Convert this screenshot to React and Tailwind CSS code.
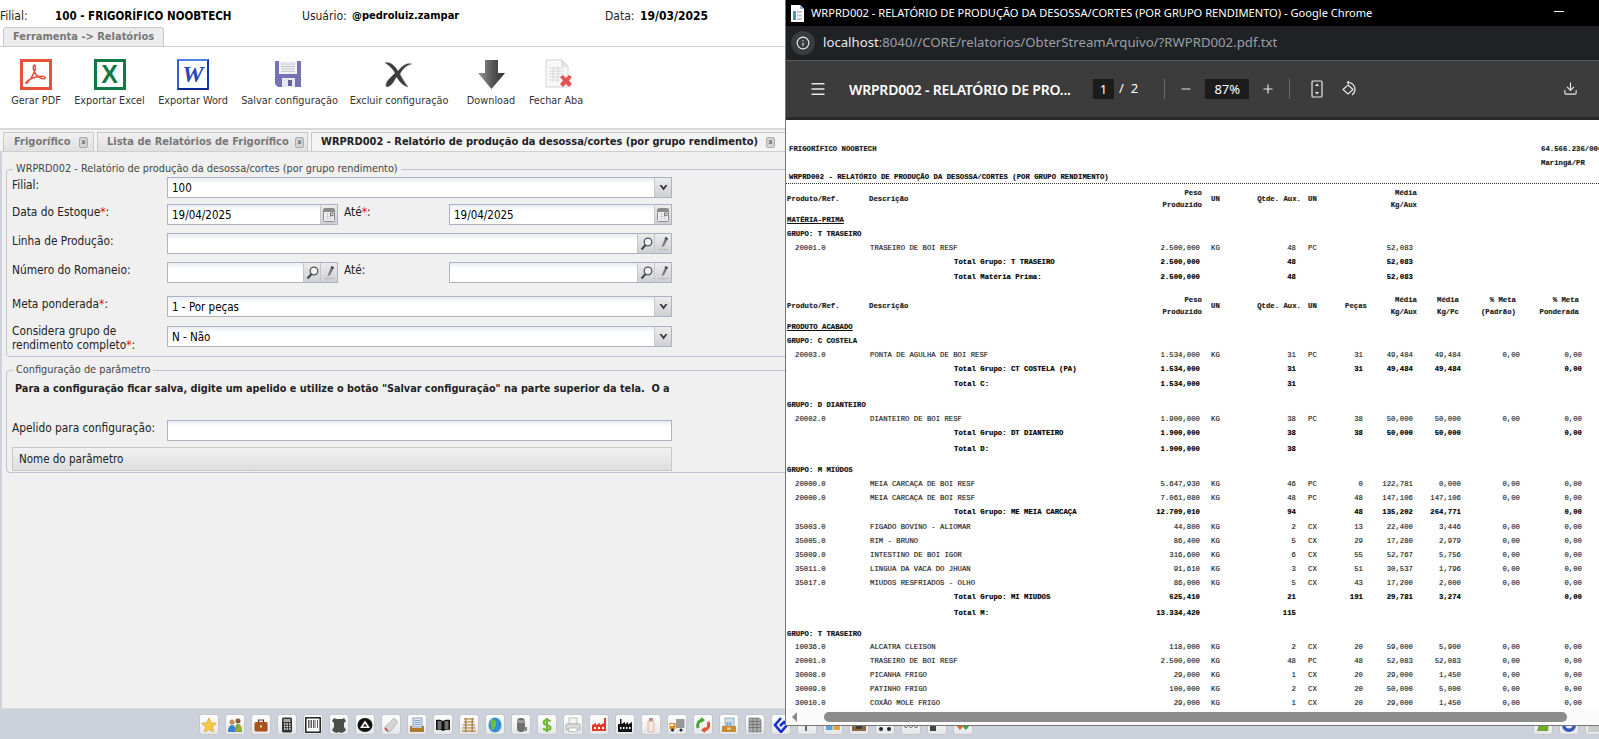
import React from 'react';
import { Menu, Minus, Plus, Download as DownloadIcon, Info } from 'lucide-react';

const labelFont = "font-['DejaVu_Sans_Condensed','Noto_Sans',sans-serif]";

// helpers for the report rows
const H = (h, text, underline) => ({ kind: 'heading', h, text, underline });
const D = (h, code, desc, peso, un, q, un2, pc, m1, m2, m3, m4) => ({ kind: 'data', h, code, desc, peso, un, q, un2, pc, m1, m2, m3, m4 });
const T = (h, label, peso, q, pc, m1, m2, m4) => ({ kind: 'total', h, label, peso, q, pc, m1, m2, m4 });

const reportRows = [
  { kind: 'top', h: 14, left: 'FRIGORÍFICO NOOBTECH', right: '64.566.236/000' },
  { kind: 'top', h: 14, left: '', right: 'Maringá/PR' },
  { kind: 'title', h: 11, text: 'WRPRD002 - RELATÓRIO DE PRODUÇÃO DA DESOSSA/CORTES (POR GRUPO RENDIMENTO)' },
  { kind: 'dots', h: 5 },
  { kind: 'head', h: 27, wide: false },
  H(14, 'MATÉRIA-PRIMA', true),
  H(14, 'GRUPO: T TRASEIRO'),
  D(14, '20001.0', 'TRASEIRO DE BOI RESF', '2.500,000', 'KG', '48', 'PC', '', '52,083', '', '', ''),
  T(15, 'Total Grupo: T TRASEIRO', '2.500,000', '48', '', '52,083', '', ''),
  T(23, 'Total Matéria Prima:', '2.500,000', '48', '', '52,083', '', ''),
  { kind: 'head', h: 27, wide: true },
  H(14, 'PRODUTO ACABADO', true),
  H(14, 'GRUPO: C COSTELA'),
  D(14, '20003.0', 'PONTA DE AGULHA DE BOI RESF', '1.534,000', 'KG', '31', 'PC', '31', '49,484', '49,484', '0,00', '0,00'),
  T(15, 'Total Grupo: CT COSTELA (PA)', '1.534,000', '31', '31', '49,484', '49,484', '0,00'),
  T(21, 'Total C:', '1.534,000', '31', '', '', '', ''),
  H(14, 'GRUPO: D DIANTEIRO'),
  D(14, '20002.0', 'DIANTEIRO DE BOI RESF', '1.900,000', 'KG', '38', 'PC', '38', '50,000', '50,000', '0,00', '0,00'),
  T(16, 'Total Grupo: DT DIANTEIRO', '1.900,000', '38', '38', '50,000', '50,000', '0,00'),
  T(21, 'Total D:', '1.900,000', '38', '', '', '', ''),
  H(14, 'GRUPO: M MIÚDOS'),
  D(14, '20000.0', 'MEIA CARCAÇA DE BOI RESF', '5.647,930', 'KG', '46', 'PC', '0', '122,781', '0,000', '0,00', '0,00'),
  D(14, '20000.0', 'MEIA CARCAÇA DE BOI RESF', '7.061,080', 'KG', '48', 'PC', '48', '147,106', '147,106', '0,00', '0,00'),
  T(15, 'Total Grupo: ME MEIA CARCAÇA', '12.709,010', '94', '48', '135,202', '264,771', '0,00'),
  D(14, '35003.0', 'FIGADO BOVINO - ALIOMAR', '44,800', 'KG', '2', 'CX', '13', '22,400', '3,446', '0,00', '0,00'),
  D(14, '35005.0', 'RIM - BRUNO', '86,400', 'KG', '5', 'CX', '29', '17,280', '2,979', '0,00', '0,00'),
  D(14, '35009.0', 'INTESTINO DE BOI IGOR', '316,600', 'KG', '6', 'CX', '55', '52,767', '5,756', '0,00', '0,00'),
  D(14, '35011.0', 'LINGUA DA VACA DO JHUAN', '91,610', 'KG', '3', 'CX', '51', '30,537', '1,796', '0,00', '0,00'),
  D(14, '35017.0', 'MIUDOS RESFRIADOS - OLHO', '86,000', 'KG', '5', 'CX', '43', '17,200', '2,000', '0,00', '0,00'),
  T(16, 'Total Grupo: MI MIUDOS', '625,410', '21', '191', '29,781', '3,274', '0,00'),
  T(21, 'Total M:', '13.334,420', '115', '', '', '', ''),
  H(13, 'GRUPO: T TRASEIRO'),
  D(14, '10036.0', 'ALCATRA CLEISON', '118,000', 'KG', '2', 'CX', '20', '59,000', '5,900', '0,00', '0,00'),
  D(14, '20001.0', 'TRASEIRO DE BOI RESF', '2.500,000', 'KG', '48', 'PC', '48', '52,083', '52,083', '0,00', '0,00'),
  D(14, '30008.0', 'PICANHA FRIGO', '29,000', 'KG', '1', 'CX', '20', '29,000', '1,450', '0,00', '0,00'),
  D(14, '30009.0', 'PATINHO FRIGO', '100,000', 'KG', '2', 'CX', '20', '50,000', '5,000', '0,00', '0,00'),
  D(14, '30010.0', 'COXÃO MOLE FRIGO', '29,000', 'KG', '1', 'CX', '20', '29,000', '1,450', '0,00', '0,00'),
];

const rowGrid = 'grid grid-cols-[84px_84px_160px_86px_41px_55px_41px_26px_50px_48px_59px_62px] whitespace-nowrap';
const headGrid = 'grid grid-cols-[83px_84px_160px_89px_41px_58px_36px_30px_50px_42px_57px_63px] whitespace-nowrap items-center';

function ReportRow({ row }) {
  const box = { height: row.h };
  if (row.kind === 'top') {
    return (
      <div style={box} className="flex font-bold text-[#222]">
        <span className="w-[755px] shrink-0 pl-[3px]">{row.left}</span>
        <span className="whitespace-nowrap">{row.right}</span>
      </div>
    );
  }
  if (row.kind === 'title') return <div style={box} className="pl-[3px] font-bold text-[#111]">{row.text}</div>;
  if (row.kind === 'dots') return <div style={box}><div className="border-t border-dotted border-[#333]" /></div>;
  if (row.kind === 'heading') {
    return (
      <div style={box} className="pl-[1px] font-bold text-[#111]">
        <span className={row.underline ? 'underline' : ''}>{row.text}</span>
      </div>
    );
  }
  if (row.kind === 'head') {
    return (
      <div style={box} className={`${headGrid} content-start font-bold text-[#222] leading-[11.5px]`}>
        <span className="pl-[1px]">Produto/Ref.</span>
        <span>Descrição</span>
        <span />
        <span className="text-right">Peso<br />Produzido</span>
        <span className="pl-[9px]">UN</span>
        <span className="text-right">Qtde. Aux.</span>
        <span className="pl-[7px]">UN</span>
        <span className="text-right">{row.wide ? 'Peças' : ''}</span>
        <span className="text-right">Média<br />Kg/Aux</span>
        <span className="text-right">{row.wide ? <>Média<br />Kg/Pc</> : ''}</span>
        <span className="text-right">{row.wide ? <>% Meta<br />(Padrão)</> : ''}</span>
        <span className="text-right">{row.wide ? <>% Meta<br />Ponderada</> : ''}</span>
      </div>
    );
  }
  if (row.kind === 'data') {
    return (
      <div style={box} className={`${rowGrid} text-[#222]`}>
        <span className="pl-[9px]">{row.code}</span>
        <span>{row.desc}</span>
        <span />
        <span className="text-right">{row.peso}</span>
        <span className="pl-[11px]">{row.un}</span>
        <span className="text-right">{row.q}</span>
        <span className="pl-[12px]">{row.un2}</span>
        <span className="text-right">{row.pc}</span>
        <span className="text-right">{row.m1}</span>
        <span className="text-right">{row.m2}</span>
        <span className="text-right">{row.m3}</span>
        <span className="text-right">{row.m4}</span>
      </div>
    );
  }
  return (
    <div style={box} className={`${rowGrid} font-bold text-black`}>
      <span />
      <span />
      <span>{row.label}</span>
      <span className="text-right">{row.peso}</span>
      <span />
      <span className="text-right">{row.q}</span>
      <span />
      <span className="text-right">{row.pc}</span>
      <span className="text-right">{row.m1}</span>
      <span className="text-right">{row.m2}</span>
      <span />
      <span className="text-right">{row.m4}</span>
    </div>
  );
}

/* toolbar icons */
function PdfIcon() {
  return (
    <svg width="32" height="31" viewBox="0 0 32 31">
      <rect x="1.5" y="1.5" width="29" height="28" fill="#fff" stroke="#e8503a" strokeWidth="3" />
      <path d="M6 24c3-1 7-7 9-13 .6-2 .5-5-.7-5s-1.300 3-.6 5c1.500 4 4.500 7.500 8 8.500 2.500.7 4 0 3.600-1.200-.5-1.300-4-1.300-8-.5-4.500 1-9 3-11 5.500-.6 1 0 1.500.7.7z" fill="none" stroke="#e8503a" strokeWidth="1.500" />
    </svg>
  );
}
function ExcelIcon() {
  return (
    <div className="w-[32px] h-[31px] border-[3px] border-[#0f7a45] bg-white flex items-center justify-center font-['Liberation_Sans',sans-serif] font-bold text-[25px] leading-none text-[#0f7a45]">X</div>
  );
}
function WordIcon() {
  return (
    <div className="w-[32px] h-[31px] border-2 border-t-[#4f7fe0] border-l-[#2f5fd0] border-r-[#1038a8] border-b-[#0a2a98] bg-white flex items-center justify-center font-['Liberation_Serif',serif] font-bold italic text-[24px] leading-none text-[#2448b8]">W</div>
  );
}
function SaveIcon() {
  return (
    <svg width="28" height="28" viewBox="0 0 28 28">
      <path d="M1 2a1 1 0 0 1 1-1h24a1 1 0 0 1 1 1v25H4l-3-3z" fill="#7670b4" />
      <rect x="5" y="1" width="18" height="13" fill="#f2f2f4" />
      <path d="M7 4h14M7 6.500h14M7 9h14M7 11.500h14" stroke="#c4c4cc" strokeWidth="1" />
      <rect x="8" y="18" width="13" height="9" fill="#e8e8ee" />
      <rect x="14" y="20" width="4" height="6" fill="#6660a4" />
    </svg>
  );
}
function DeleteIcon() {
  return (
    <svg width="29" height="28" viewBox="0 0 29 28">
      <path d="M1 3C6 1 11 6 14 11 18 6 23 2 28 4 22 5 18 10 16 14 18 18 21 23 24 27 19 26 15 21 12.500 17 10 21 8 26 3 27 1 26 2 22 5 19 7 17 9 15 11 13 8 8 5 5 1 3z" fill="#3c3c3c" stroke="#8a8a8a" strokeWidth=".5" />
    </svg>
  );
}
function ArrowIcon() {
  return (
    <svg width="27" height="29" viewBox="0 0 27 29">
      <defs>
        <linearGradient id="arr" x1="0" x2="1" y1="0" y2="0">
          <stop offset="0" stopColor="#9a9a9a" />
          <stop offset=".5" stopColor="#5a5a5a" />
          <stop offset="1" stopColor="#2e2e2e" />
        </linearGradient>
      </defs>
      <path d="M7 0h13v13h7L13.500 29 0 13h7z" fill="url(#arr)" />
    </svg>
  );
}
function CloseDocIcon() {
  return (
    <svg width="28" height="30" viewBox="0 0 28 30">
      <path d="M1 1h16l6 6v21H1z" fill="#f8f8f8" stroke="#d4d4d4" />
      <path d="M17 1v6h6" fill="#e4e4e4" stroke="#d4d4d4" />
      <path d="M4 9h15M4 12h15M4 15h15M4 18h12M4 21h10M8 8v15M13 8v15" stroke="#d8d8d8" strokeWidth="1" />
      <path d="M15 18l3-2 3 3 3-3 3 2-3 3.500 3 3.500-3 3-3-3-3 3-3-3 3-3.500z" fill="#e25555" />
    </svg>
  );
}

const toolbarItems = [
  { label: 'Gerar PDF', w: 'w-[50px]', icon: <PdfIcon /> },
  { label: 'Exportar Excel', w: 'w-[69px]', icon: <ExcelIcon /> },
  { label: 'Exportar Word', w: 'w-[70px]', icon: <WordIcon /> },
  { label: 'Salvar configuração', w: 'w-[95px]', icon: <SaveIcon />, iconBox: 'pr-[4px]' },
  { label: 'Excluir configuração', w: 'w-[96px]', icon: <DeleteIcon />, iconBox: 'pr-[2px]' },
  { label: 'Download', w: 'w-[48px] ml-[6px]', icon: <ArrowIcon /> },
  { label: 'Fechar Aba', w: 'w-[54px]', icon: <CloseDocIcon />, iconBox: 'pl-[6px]' },
];

/* dock icons */
const dockIcons = [
  <path d="M8 1l2.200 4.700 5.100.6-3.800 3.500 1 5.100L8 12.400 3.500 14.900l1-5.100L.7 6.300l5.100-.6z" fill="#f6c945" stroke="#d99a20" strokeWidth=".6" />,
  <g><circle cx="5" cy="5" r="2.500" fill="#c98a55" /><circle cx="11" cy="4" r="2.500" fill="#8a5a35" /><path d="M1 15c0-5 2-7 4-7s4 2 4 7z" fill="#3b7fd0" /><path d="M8 15c0-6 1-8 3-8s4 2 4 8z" fill="#6fae3a" /><path d="M9 14l5-5 1 1-5 5z" fill="#e8a020" /></g>,
  <g><rect x="1.500" y="5" width="13" height="9.500" rx="1.500" fill="#a8501f" /><path d="M5.500 5V3h5v2" fill="none" stroke="#6b3312" strokeWidth="1.200" /><rect x="7" y="8.500" width="2" height="2" fill="#f0d080" /></g>,
  <g><rect x="3" y=".5" width="10" height="15" rx="1.500" fill="#333" /><rect x="4.500" y="2" width="7" height="3" fill="#aaa" /><path d="M5 7h1.500M7.500 7H9M10 7h1.500M5 9.500h1.500M7.500 9.500H9M10 9.500h1.500M5 12h1.500M7.500 12H9M10 12h1.500" stroke="#eee" strokeWidth="1.300" /></g>,
  <g><rect x=".8" y=".8" width="14.400" height="14.400" fill="#fff" stroke="#111" strokeWidth="1.400" /><path d="M3.500 3v8M5 3v8M6.500 3v8M8.500 3v8M10 3v8M12.500 3v8" stroke="#333" strokeWidth=".8" /></g>,
  <path d="M3 1l2 1h6l2-1 2 3-2 2v4l2 3-2 2-3 1-2-1-2 1-3-1-2-2 2-3V6L1 4z" fill="#4c4f48" />,
  <g><ellipse cx="8" cy="8" rx="7.500" ry="7" fill="#111" /><path d="M8 3.500L13 11H3z" fill="#fff" /><path d="M8 6.500L10 9.500H6z" fill="#111" /></g>,
  <g><path d="M11 1l4 4-8 10c-3 1-6-2-5-5z" fill="#d4d4d4" stroke="#999" strokeWidth=".5" /><path d="M2 11l3 3" stroke="#c84040" strokeWidth="1.600" /></g>,
  <g><rect x="4" y="1" width="9" height="9" fill="#dfe8f5" stroke="#5a7fb0" strokeWidth=".7" /><path d="M5.500 3.500h6M5.500 5.500h6M5.500 7.500h6" stroke="#5a7fb0" strokeWidth=".7" /><path d="M1 9h2v2h10V9h2v6H1z" fill="#b07a28" /></g>,
  <g><path d="M8 4C6 2.500 3 2.500 1 3v10c2-.5 5-.5 7 1 2-1.500 5-1.500 7-1V3c-2-.5-5-.5-7 1z" fill="#111" /><path d="M2.500 5h4M2.500 7h4M2.500 9h4M2.500 11h4M9.500 5h4M9.500 7h4M9.500 9h4M9.500 11h4" stroke="#fff" strokeWidth=".8" /></g>,
  <g fill="#c8ab7a"><rect x="3" y="1" width="10" height="1.800" /><rect x="3" y="4" width="10" height="1.800" /><rect x="2" y="7" width="12" height="1.800" /><rect x="1.500" y="10" width="13" height="1.800" /><rect x="1" y="13" width="14" height="2.200" /><rect x="4" y="1" width="1.500" height="14" fill="#a88a5a" /><rect x="10.500" y="1" width="1.500" height="14" fill="#a88a5a" /></g>,
  <g><ellipse cx="8" cy="8" rx="6.500" ry="7.500" fill="#2f8fd8" /><path d="M5 2c3 0 5 3 4 6s-2 5-4 5 0-3-1-5 0-6 1-6z" fill="#6fbf3a" /></g>,
  <g><rect x="4" y="1" width="8" height="14" rx="3.500" fill="#6f6f6f" /><rect x="4" y="3" width="8" height="3" fill="#9a9a9a" /><path d="M12 10h2v4h-2" fill="#888" /></g>,
  <path d="M11.500 4.500C10.800 3.500 9.500 3 8 3 6 3 4.800 4 4.800 5.500c0 3.500 6.700 2 6.700 5.300C11.500 12.200 10 13 8 13c-1.800 0-3.200-.7-3.800-1.800M8 1v14" fill="none" stroke="#6eb52f" strokeWidth="2.200" />,
  <g><rect x="4" y="1" width="8" height="6" fill="#f4f4f4" stroke="#aaa" strokeWidth=".7" /><rect x="1" y="7" width="14" height="6" rx="1" fill="#ddd" stroke="#999" strokeWidth=".7" /><rect x="4" y="11" width="8" height="3.500" fill="#fff" stroke="#aaa" strokeWidth=".7" /></g>,
  <g><path d="M1 14V8l4-2v2l4-2v2l4-2V1h2v13z" fill="#e23b2e" /><path d="M3 10h2v2H3zM7 10h2v2H7zM11 10h2v2h-2z" fill="#fff" /></g>,
  <g><path d="M1 15V7h2V2h1.500v5L8 5v2.500L11 5v2.500L15 5v10z" fill="#111" /><path d="M3 10h1.500v2H3zM6 10h1.500v2H6zM9 10h1.500v2H9zM12 10h1.500v2H12z" fill="#fff" /></g>,
  <g><rect x="6" y="1" width="4" height="3" fill="#c88" /><rect x="5" y="4" width="6" height="11" rx="1" fill="#f6e6dc" stroke="#c9a090" strokeWidth=".7" /></g>,
  <g><rect x="7" y="2" width="8.500" height="9" fill="#999" /><path d="M.5 6h6v6H.5z" fill="#e88a1a" /><rect x="1.500" y="7" width="3" height="2" fill="#fff" /><circle cx="3.500" cy="13" r="1.500" fill="#222" /><circle cx="12" cy="13" r="1.500" fill="#222" /></g>,
  <g fill="none" strokeWidth="3"><path d="M3 11C1.500 7 4 3 8 2.500" stroke="#4aa33a" /><path d="M13 5c2 4-.5 8-5 8.500" stroke="#e2562a" /><path d="M6 0l4 3-4 3z" fill="#4aa33a" stroke="none" /><path d="M10 10l-4 3 4 3z" fill="#e2562a" stroke="none" /></g>,
  <g><rect x="4" y="1" width="9" height="9" fill="#cfe0ee" stroke="#7a97b0" strokeWidth=".7" /><path d="M5.500 6h2M8.500 6h2M5.500 8h2M8.500 8h2" stroke="#3a6a90" /><path d="M1 9h14v6H1z" fill="#c98a35" /><rect x="6" y="10.500" width="4" height="2" fill="#f0d080" /></g>,
  <g><path d="M2 1h10l2 2v12H2z" fill="#aaa" stroke="#777" strokeWidth=".7" /><path d="M2 4.500h12M2 7.500h12M2 10.500h12M6 1v14M10 1v14" stroke="#666" strokeWidth=".7" /></g>,
  <g fill="none" stroke="#1430d8" strokeWidth="2.600"><path d="M8 1L2 8l6 7 6-7-3-3-4 4" /></g>,
  <path d="M4 2v3h3v9" fill="none" stroke="#333" strokeWidth="1.400" />,
  <g><rect x="1" y="3" width="6.500" height="10" fill="#5aa0e0" /><rect x="8.500" y="3" width="6.500" height="10" fill="#e8a030" /></g>,
  <g><rect x="1" y="4" width="14" height="10" fill="#8a6a3a" /><rect x="5" y="6" width="6" height="6" fill="#3a3a3a" /></g>,
  <g><rect x="2" y="2" width="12" height="5" fill="#222" /><circle cx="4" cy="12" r="2" fill="#222" /><circle cx="12" cy="12" r="2" fill="#222" /></g>,
  <g fill="none" stroke="#777" strokeWidth="1"><circle cx="3" cy="9" r="1.600" /><circle cx="8" cy="9" r="1.600" /><circle cx="13" cy="9" r="1.600" /></g>,
  <g fill="#444"><rect x="1" y="8" width="6" height="6" /><rect x="9" y="2" width="6" height="6" /></g>,
  <g><path d="M1 8l4-4 4 4-4 5z" fill="#e2652a" /><path d="M7 9l4-5 4 4-4 5z" fill="#3fa53a" /></g>,
];
const dockRight = [
  <g><path d="M2 14l3-10 5 3 4-4-1 11z" fill="#6eaa2c" /></g>,
  <g><circle cx="8" cy="8" r="7" fill="#3858b8" /><circle cx="8" cy="8" r="3.500" fill="#e8e8f4" /></g>,
  <g><rect x="1" y="2" width="14" height="4" fill="#222" /><rect x="1" y="9" width="14" height="6" fill="#ccc" /></g>,
];

function DockButton({ children, className = '' }) {
  return (
    <div className={`w-[20px] h-[21px] shrink-0 rounded-[3px] bg-gradient-to-b from-white to-[#e4e6ea] border border-[#c4c8ce] flex items-center justify-center ${className}`}>
      <svg width="16" height="16" viewBox="0 0 16 16">{children}</svg>
    </div>
  );
}

/* form bits */
function TextBox({ value, className = '', children }) {
  return (
    <div className={`h-[21px] flex border border-[#aeb2c2] bg-gradient-to-b from-[#e9ecf3] via-white via-[30%] to-white ${className}`}>
      <span className="flex-1 pl-[4px] leading-[21px] text-[11.500px] text-black">{value}</span>
      {children}
    </div>
  );
}
function Side({ children, w = 'w-[17px]' }) {
  return (
    <span className={`${w} h-full shrink-0 flex items-center justify-center border-l border-[#c4c6ce] bg-gradient-to-b from-[#ececec] to-[#cfd0d4]`}>
      {children}
    </span>
  );
}
const Caret = () => (
  <svg width="9" height="7" viewBox="0 0 9 7"><path d="M.5 1h2L4.500 3.500 6.500 1h2L4.500 6.500z" fill="#333" /></svg>
);
const Calendar = () => (
  <svg width="12" height="14" viewBox="0 0 12 14">
    <rect x=".5" y=".5" width="11" height="13" rx="1" fill="#f4f4f4" stroke="#8a8a8a" />
    <rect x="1" y="1" width="10" height="3" fill="#8a8a8a" />
    <rect x="7.500" y="5" width="2.500" height="2.500" fill="#fff" stroke="#444" strokeWidth=".7" />
    <path d="M2 6h4M2 8.500h8M2 11h8M4.500 5v7M7.500 8v4" stroke="#c4c4c4" strokeWidth=".7" />
  </svg>
);
const Lens = () => (
  <svg width="13" height="14" viewBox="0 0 13 14"><circle cx="8" cy="5" r="3.800" fill="#eef2f4" stroke="#555" strokeWidth="1.300" /><path d="M5.500 8L1.500 12.500" stroke="#444" strokeWidth="2" /></svg>
);
const Pencil = () => (
  <svg width="13" height="15" viewBox="0 0 13 15"><path d="M8.500 1l2.500 1.500L7 10l-2.500 1z" fill="#77777a" /><path d="M8.500 1l2.500 1.500-.8 1.500L7.700 2.500z" fill="#444" /><path d="M1.500 13.500h10" stroke="#bcbcbc" strokeWidth="1.400" /></svg>
);
const LookupButtons = () => (
  <>
    <Side><Lens /></Side>
    <Side><Pencil /></Side>
  </>
);
const Req = () => <span className="text-[#e81010]">*</span>;

function TabClose() {
  return (
    <span className="w-[9px] h-[11px] shrink-0 rounded-[2px] bg-[#d4d4d4] border border-[#aaa] flex items-center justify-center text-[7px] leading-none font-bold text-[#666]">x</span>
  );
}

export default function App() {
  return (
    <div className={`relative w-[1599px] h-[739px] overflow-hidden bg-[#cdd2da] ${labelFont} text-[11.800px] text-[#222]`}>
      {/* sistema */}
      <div className="flex flex-col h-full">
        <div className="bg-white h-[27px] flex items-start pt-[9px] leading-[14px] text-[12px] whitespace-nowrap">
          <span className="w-[55px]">Filial:</span>
          <span className="w-[247px] font-bold text-black text-[11.500px]">100 - FRIGORÍFICO NOOBTECH</span>
          <span className="w-[50px]">Usuário:</span>
          <span className="w-[253px] font-bold text-black text-[11px]">@pedroluiz.zampar</span>
          <span className="w-[35px]">Data:</span>
          <span className="font-bold text-black">19/03/2025</span>
        </div>

        <div className="bg-white h-[20px] border-b border-[#cfcfcf] pl-[3px]">
          <div className="w-[161px] h-[20px] rounded-t-[3px] border border-[#c8c8c8] bg-[#ececec] font-bold text-[#777] text-[11px] leading-[18px] pl-[9px] whitespace-nowrap">Ferramenta -&gt; Relatórios</div>
        </div>

        <div className="bg-white h-[83px] border-b-2 border-[#d8d8d8] flex gap-[14px] pl-[11px] pt-[11px]">
          {toolbarItems.map((item) => (
            <div key={item.label} className={`${item.w} flex flex-col items-center`}>
              <div className={`h-[32px] flex items-center justify-center ${item.iconBox || ''}`}>{item.icon}</div>
              <span className="mt-[4px] whitespace-nowrap text-[#333] text-[10.800px] leading-[14px]">{item.label}</span>
            </div>
          ))}
        </div>

        <div className="bg-[#f4f4f4] h-[22px] flex items-end gap-[3px] pl-[3px] border-b border-[#cfcfcf] whitespace-nowrap">
          <div className="w-[91px] h-[19px] flex items-center justify-between pl-[10px] pr-[5px] border border-b-0 border-[#c8c8c8] bg-gradient-to-b from-[#f0f0f0] to-[#e0e0e0] font-bold text-[#777] text-[11px]">
            Frigorífico <TabClose />
          </div>
          <div className="w-[211px] h-[19px] flex items-center justify-between pl-[9px] pr-[3px] border border-b-0 border-[#c8c8c8] bg-gradient-to-b from-[#f0f0f0] to-[#e0e0e0] font-bold text-[#777] text-[11px]">
            Lista de Relatórios de Frigorífico <TabClose />
          </div>
          <div className="w-[480px] h-[19px] shrink-0 flex items-center justify-between pl-[9px] pr-[15px] border border-b-0 border-[#c8c8c8] bg-[#f4f4f4] font-bold text-[#222] text-[11px]">
            WRPRD002 - Relatório de produção da desossa/cortes (por grupo rendimento) <TabClose />
          </div>
        </div>

        <div className="ml-[2px] h-[556px] w-[790px] bg-[#f0f0f0] pt-[10px]">
          <fieldset className="ml-[4px] border border-[#bfc3cc] rounded-[4px] pl-[5px] pr-0 pb-[9px]">
            <legend className="ml-[1px] px-[3px] text-[10.850px] leading-[14px] text-[#444] whitespace-nowrap">WRPRD002 - Relatório de produção da desossa/cortes (por grupo rendimento)</legend>
            <div className="grid grid-cols-[155px_171px_111px_223px] mt-[1px] leading-[14px]">
              <label className="pt-[1px]">Filial:</label>
              <TextBox value="100" className="col-span-3"><Side><Caret /></Side></TextBox>

              <label className="pt-[1px] mt-[6px]">Data do Estoque<Req />:</label>
              <TextBox value="19/04/2025" className="mt-[6px]"><Side><Calendar /></Side></TextBox>
              <label className="pl-[6px] mt-[6px] pt-[1px]">Até<Req />:</label>
              <TextBox value="19/04/2025" className="mt-[6px]"><Side><Calendar /></Side></TextBox>

              <label className="pt-[1px] mt-[8px]">Linha de Produção:</label>
              <TextBox value="" className="col-span-3 mt-[8px] border-[#8f8f96]"><LookupButtons /></TextBox>

              <label className="pt-[1px] mt-[8px]">Número do Romaneio:</label>
              <TextBox value="" className="mt-[8px]"><LookupButtons /></TextBox>
              <label className="pl-[6px] mt-[8px] pt-[1px]">Até:</label>
              <TextBox value="" className="mt-[8px]"><LookupButtons /></TextBox>

              <label className="pt-[1px] mt-[13px]">Meta ponderada<Req />:</label>
              <TextBox value="1 - Por peças" className="col-span-3 mt-[13px]"><Side><Caret /></Side></TextBox>

              <label className="mt-[7px] h-[23px] whitespace-nowrap">Considera grupo de<br />rendimento completo<Req />:</label>
              <TextBox value="N - Não" className="col-span-3 mt-[9px]"><Side><Caret /></Side></TextBox>
            </div>
          </fieldset>

          <fieldset className="ml-[4px] mt-[6px] border border-[#bfc3cc] rounded-[4px] pl-[5px] pr-0 pb-[1px]">
            <legend className="ml-[1px] px-[3px] text-[10.850px] leading-[14px] text-[#444] whitespace-nowrap">Configuração de parâmetro</legend>
            <p className="mt-[5px] pl-[3px] font-bold text-[10.800px] leading-[14px] text-[#222] whitespace-pre">Para a configuração ficar salva, digite um apelido e utilize o botão "Salvar configuração" na parte superior da tela.  O a</p>
            <div className="grid grid-cols-[155px_505px] mt-[24px] leading-[14px]">
              <label className="pt-[1px]">Apelido para configuração:</label>
              <TextBox value="" />
            </div>
            <div className="w-[660px] h-[24px] mt-[6px] border border-[#c8c8c8] bg-gradient-to-b from-[#f2f2f2] to-[#dedede] pl-[6px] text-[11.500px] leading-[22px] text-[#222]">Nome do parâmetro</div>
          </fieldset>
        </div>

        {/* dock */}
        <div className="flex-1 border-t border-[#d8dbe0] flex items-start pt-[5px] pl-[199px] gap-[6px] relative">
          {dockIcons.map((icon, i) => <DockButton key={i}>{icon}</DockButton>)}
          <div className="w-[548px] shrink-0" />
          {dockRight.map((icon, i) => <DockButton key={i}>{icon}</DockButton>)}
        </div>
      </div>

      {/* janela do chrome por cima */}
      <div className="absolute left-[785px] top-0 w-[814px] h-[726px] flex flex-col border-l border-b border-[#777] bg-white overflow-hidden font-['Noto_Sans',sans-serif]">
        <div className="h-[26px] shrink-0 bg-black flex items-center pl-[4px] text-white text-[11.100px] whitespace-nowrap">
          <svg width="15" height="17" viewBox="0 0 15 17" className="mr-[6px] shrink-0">
            <path d="M1 0h9l4 4v13H1z" fill="#fff" />
            <path d="M10 0l4 4h-4z" fill="#9db8d8" />
            <path d="M3 6h3v9H3z" fill="#4a8fd0" />
            <path d="M7 6h5v2H7zM7 9.500h5v2H7zM7 13h5v2H7z" fill="#b8c8da" />
          </svg>
          <span>WRPRD002 - RELATÓRIO DE PRODUÇÃO DA DESOSSA/CORTES (POR GRUPO RENDIMENTO) - Google Chrome</span>
          <span className="absolute left-[768px] top-[11px] w-[10px] h-[1px] bg-white" />
        </div>
        <div className="h-[35px] shrink-0 bg-[#202124] border-b border-[#5a5a5a] flex items-center pl-[5px] text-[13.200px] whitespace-nowrap">
          <span className="w-[24px] h-[24px] rounded-full bg-[#3a3b3e] flex items-center justify-center mr-[8px] text-[#e8eaed]"><Info size={14} /></span>
          <span className="text-[#e8eaed]">localhost</span>
          <span className="text-[#9aa0a6]">:8040//CORE/relatorios/ObterStreamArquivo/?RWPRD002.pdf.txt</span>
        </div>
        <div className="h-[56px] shrink-0 bg-[#3c3c3c] relative flex items-center text-white whitespace-nowrap">
          <Menu size={18} strokeWidth={1.800} className="ml-[23px] text-[#e8e8e8]" />
          <span className="ml-[22px] w-[244px] text-[14px] font-semibold tracking-[-0.2px]">WRPRD002 - RELATÓRIO DE PRO...</span>
          <span className="w-[21px] h-[20px] bg-[#1c1c1c] text-[13px] leading-[20px] text-center">1</span>
          <span className="ml-[5px] text-[13px]">/</span>
          <span className="ml-[7px] text-[13px]">2</span>
          <span className="ml-[26px] w-px h-[20px] bg-[#6a6a6a]" />
          <Minus size={14} strokeWidth={2} className="ml-[14px] text-[#e8e8e8]" />
          <span className="ml-[12px] w-[44px] h-[20px] bg-[#1c1c1c] text-[13px] leading-[20px] text-center">87%</span>
          <Plus size={14} strokeWidth={2} className="ml-[12px] text-[#e8e8e8]" />
          <span className="ml-[14px] w-px h-[20px] bg-[#6a6a6a]" />
          <svg width="12" height="18" viewBox="0 0 12 18" className="ml-[21px]">
            <rect x="1" y="1" width="10" height="16" rx="1" fill="none" stroke="#e8e8e8" strokeWidth="1.200" />
            <path d="M6 3.500L8 6H4zM6 14.500L4 12h4z" fill="#e8e8e8" />
          </svg>
          <svg width="18" height="18" viewBox="0 0 18 18" className="ml-[16px]">
            <path d="M9 5l5 4.500L9 14 4 9.500z" fill="none" stroke="#e8e8e8" strokeWidth="1.200" />
            <path d="M10 2.500a7 7 0 0 1 6 7 7 7 0 0 1-3 5.500" fill="none" stroke="#e8e8e8" strokeWidth="1.200" />
            <path d="M10 .5v4L7.500 2.500z" fill="#e8e8e8" />
          </svg>
          <DownloadIcon size={15} strokeWidth={1.800} className="absolute left-[777px] top-[20px] text-[#e8e8e8]" />
        </div>
        <div className="h-[3px] shrink-0 bg-[#2a2a2a]" />
        <div className="flex-1 min-h-0 pt-[24px] overflow-hidden bg-white font-['Liberation_Mono',monospace] text-[7.300px] leading-[10px] [text-shadow:0_0_1px_rgba(0,0,0,0.35)]">
          {reportRows.map((row, i) => <ReportRow key={i} row={row} />)}
        </div>
        <div className="h-[16px] shrink-0 bg-[#fbfbfb] flex items-center relative">
          <span className="ml-[6px] w-0 h-0 border-y-[5px] border-y-transparent border-r-[5px] border-r-[#888]" />
          <span className="absolute left-[38px] top-[3px] w-[743px] h-[10px] rounded-full bg-[#8c8c8c]" />
        </div>
      </div>
    </div>
  );
}
